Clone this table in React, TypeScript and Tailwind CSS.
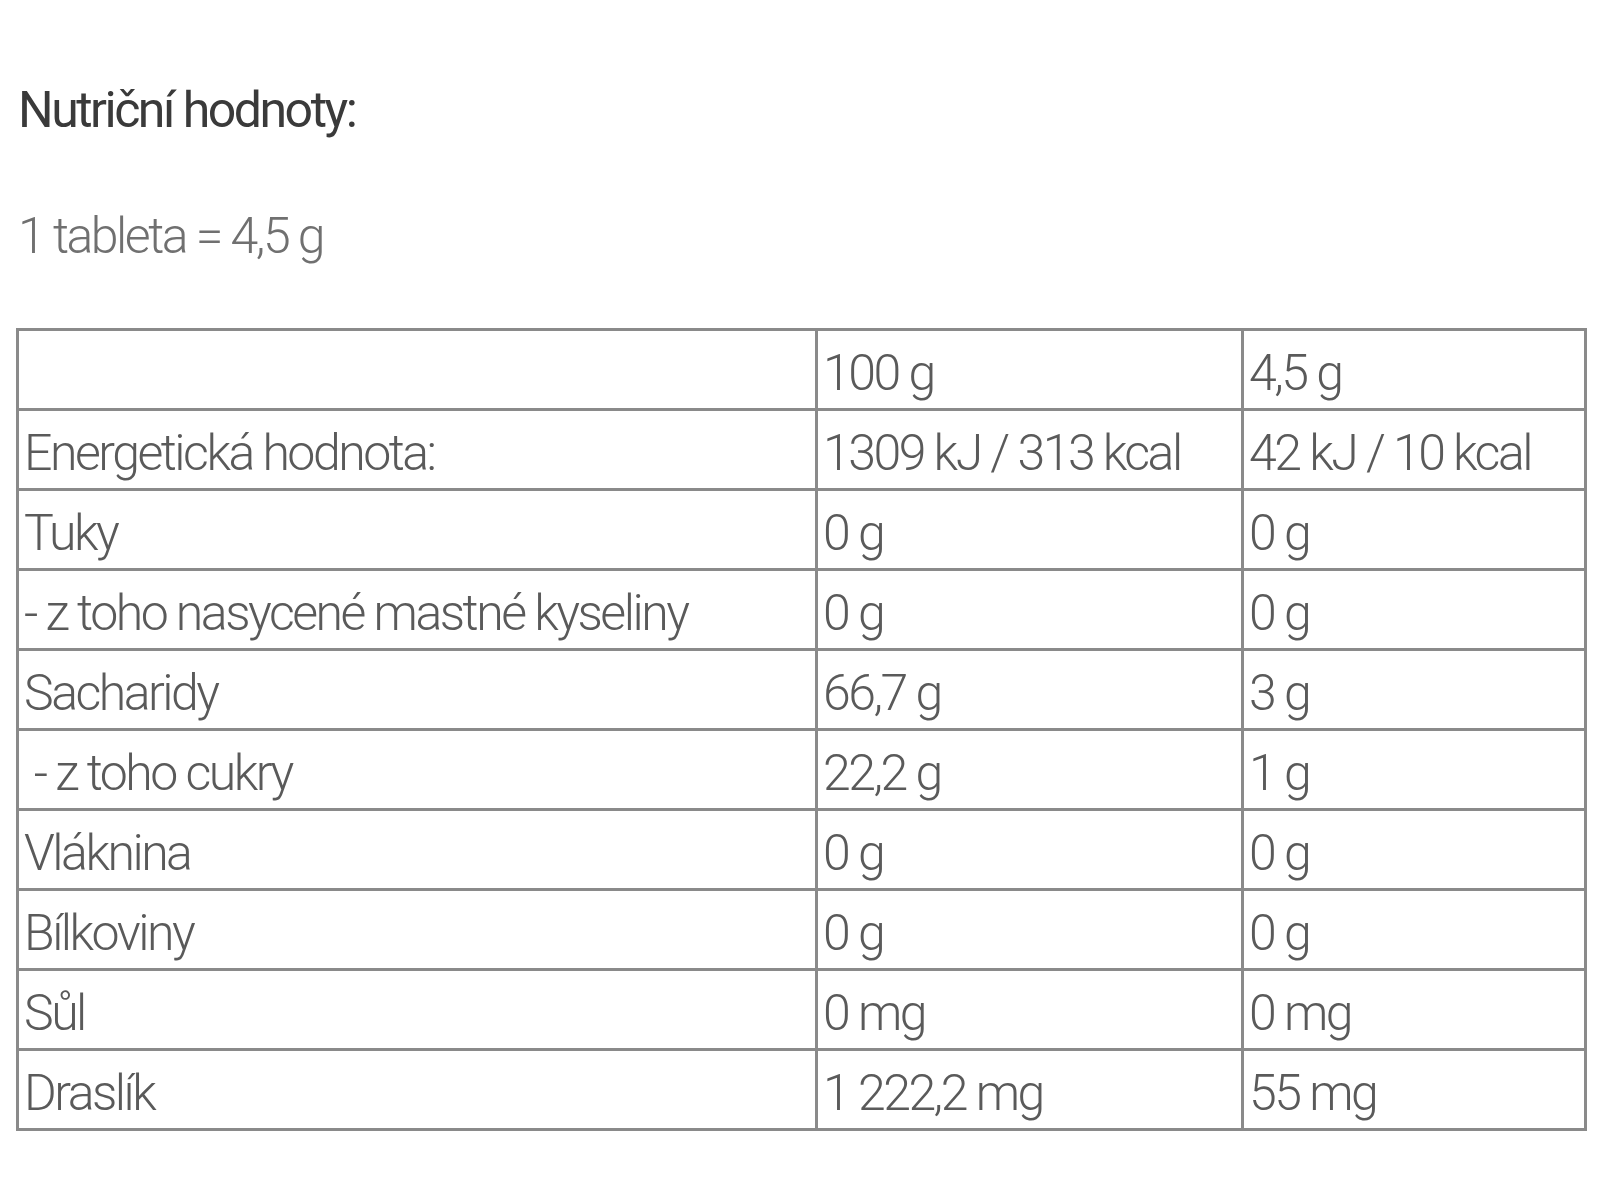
import React from "react";

const rows: [string, string, string][] = [
  ["", "100 g", "4,5 g"],
  ["Energetická hodnota:", "1309 kJ / 313 kcal", "42 kJ / 10 kcal"],
  ["Tuky", "0 g", "0 g"],
  ["- z toho nasycené mastné kyseliny", "0 g", "0 g"],
  ["Sacharidy", "66,7 g", "3 g"],
  ["\u00a0- z toho cukry", "22,2 g", "1 g"],
  ["Vláknina", "0 g", "0 g"],
  ["Bílkoviny", "0 g", "0 g"],
  ["Sůl", "0 mg", "0 mg"],
  ["Draslík", "1 222,2 mg", "55 mg"],
];

const cell = "border-[3px] border-[#8a8a8a] px-[5px] pt-[6px] align-middle leading-[70px] whitespace-nowrap overflow-hidden";

export default function App() {
  return (
    <div className="min-h-screen bg-white pl-[16px] pt-[82px] font-['Roboto',sans-serif] font-light tracking-[-2.5px]">
      <h2 className="text-[50px] leading-[56px] text-[#3a3a3a] font-normal pl-[2px]">Nutriční hodnoty:</h2>
      <p className="mt-[70px] text-[50px] leading-[56px] text-[#707070] pl-[2px]">1 tableta = 4,5 g</p>
      <table className="mt-[64px] w-[1568px] table-fixed border-collapse border-[3px] border-[#8a8a8a] text-[50px] text-[#5a5a5a]">
        <colgroup>
          <col className="w-[799px]" />
          <col className="w-[426px]" />
          <col className="w-[343px]" />
        </colgroup>
        <tbody>
          {rows.map((r, i) => (
            <tr key={i} className="h-[80px]">
              <td className={cell}>{r[0]}</td>
              <td className={cell}>{r[1]}</td>
              <td className={cell}>{r[2]}</td>
            </tr>
          ))}
        </tbody>
      </table>
    </div>
  );
}
